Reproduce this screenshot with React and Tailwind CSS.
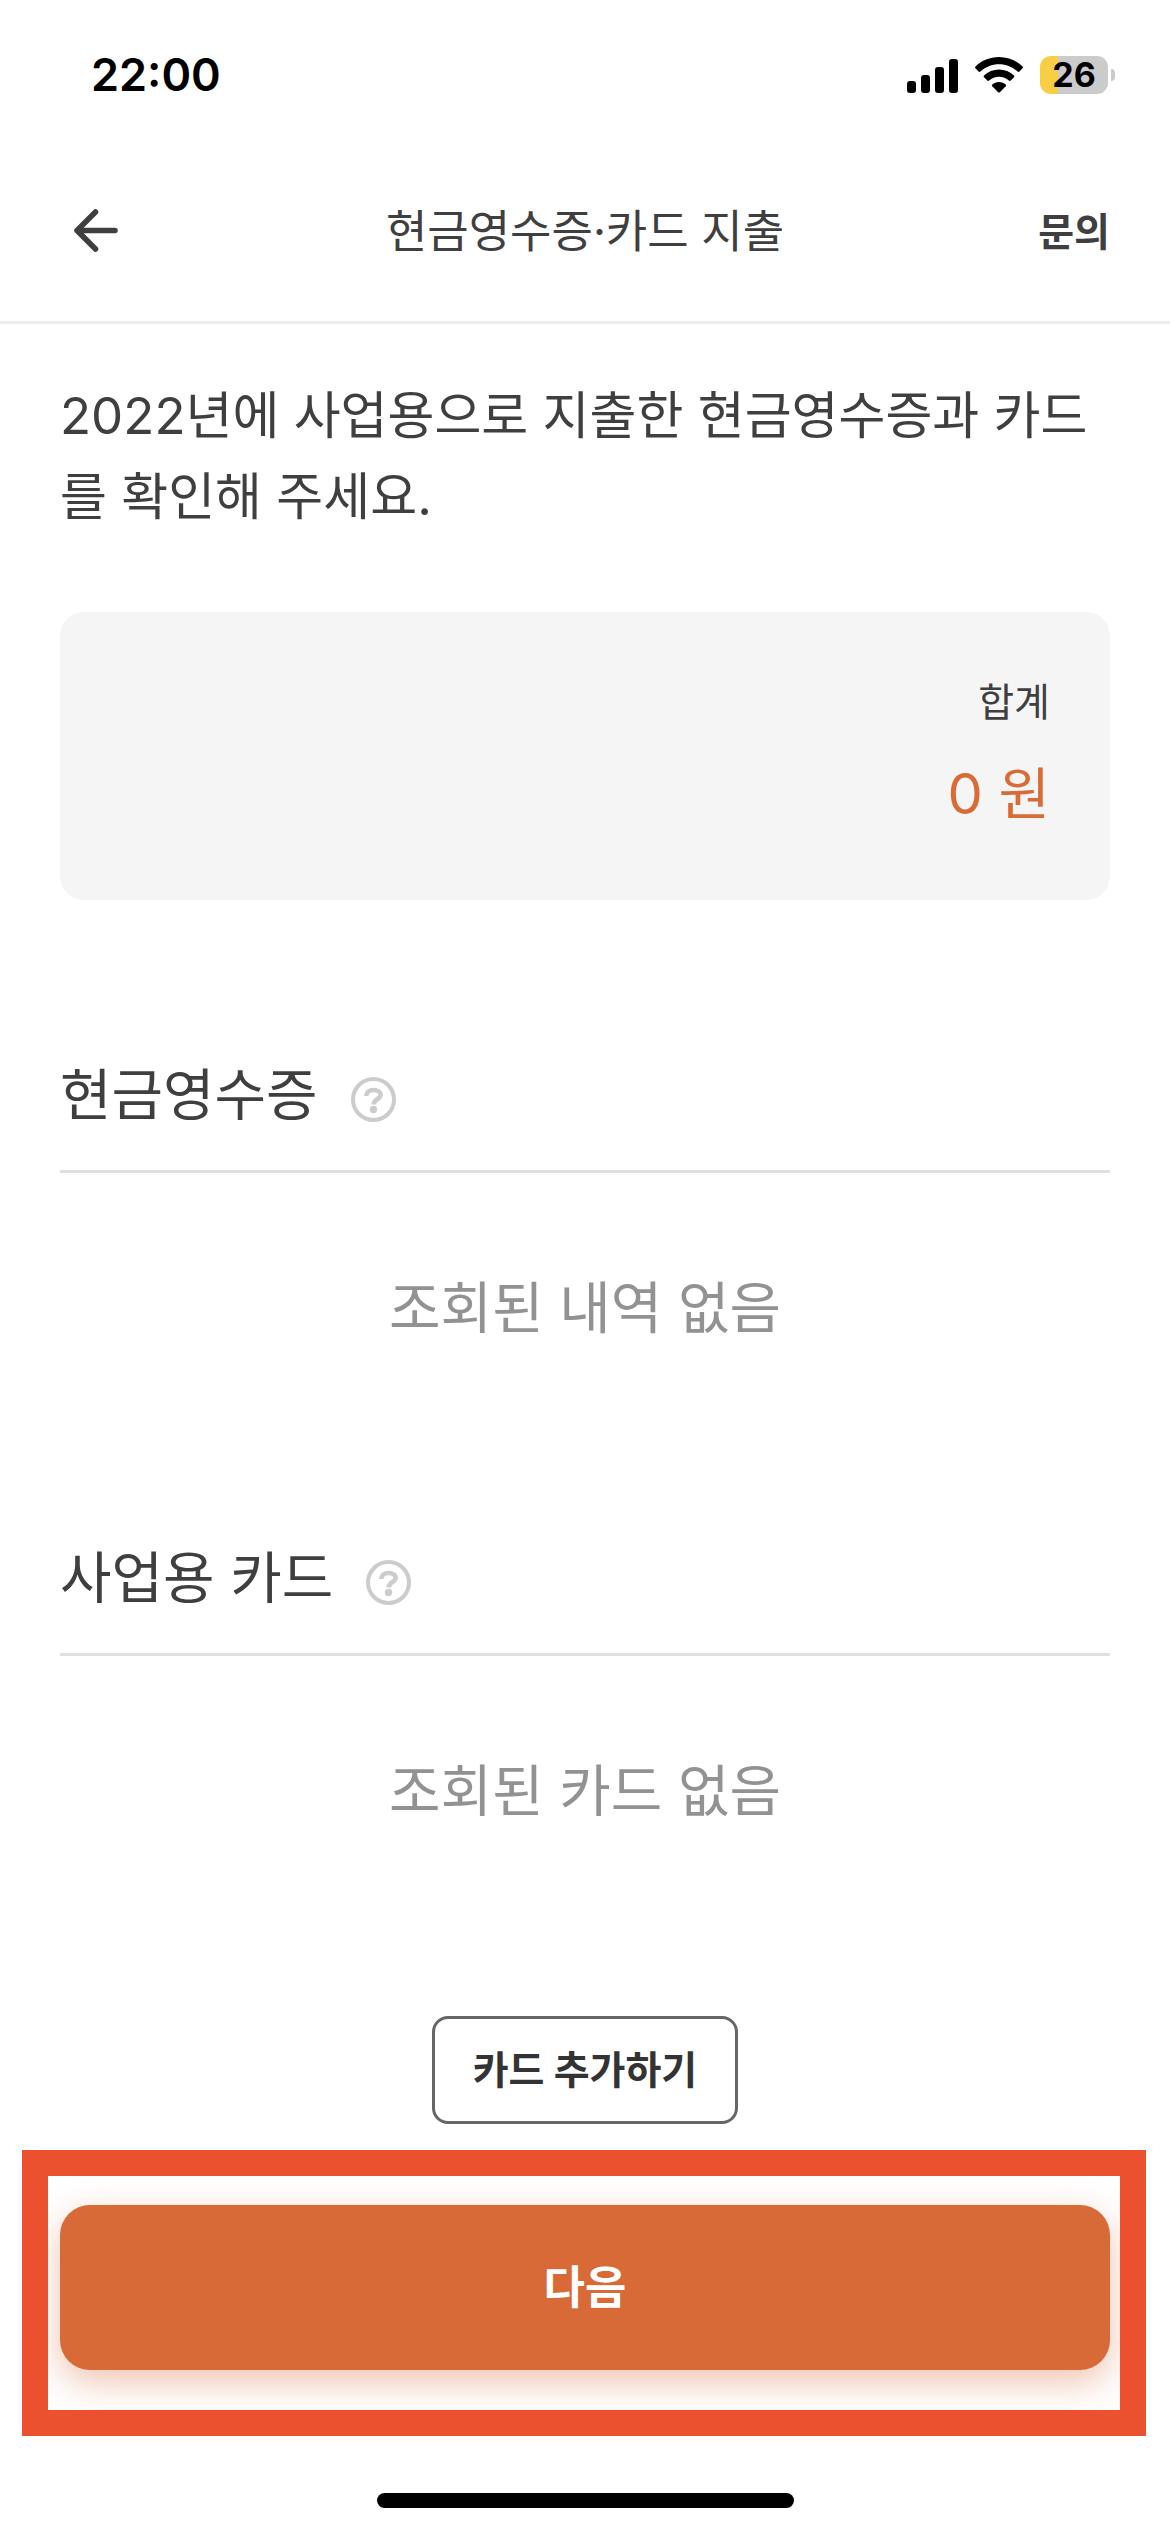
import React from 'react';

const sections = [
  { id: 'receipt', title: '현금영수증', empty: '조회된 내역 없음' },
  { id: 'card', title: '사업용 카드', empty: '조회된 카드 없음' },
];

function StatusBar() {
  return (
    <div className="flex justify-between items-center pt-[45px] pb-[33px] pl-[91px] pr-[55px] text-black">
      <span className="text-[45px] leading-[60px] font-semibold">22:00</span>
      <div className="flex items-center gap-[17px]">
        <svg width="51" height="36" viewBox="0 0 51 36" fill="currentColor">
          <rect x="0" y="24" width="9" height="12" rx="3" />
          <rect x="14" y="18" width="9" height="18" rx="3" />
          <rect x="28" y="10" width="9" height="26" rx="3" />
          <rect x="42" y="2" width="9" height="34" rx="3" />
        </svg>
        <svg width="48" height="36" viewBox="0 0 48 36" fill="currentColor">
          <path d="M24 0C33 0 41.500 3.500 47.500 9.500Q48.400 10.400 47.500 11.300L44.500 14.600Q43.600 15.500 42.700 14.600C37.600 9.800 31 7.200 24 7.200S10.400 9.800 5.300 14.600Q4.400 15.500 3.500 14.600L.5 11.300Q-.4 10.400.5 9.500C6.500 3.500 15 0 24 0Z" />
          <path d="M24 12.500C29.800 12.500 35 14.700 39 18.400Q39.900 19.300 39 20.200L35.700 23.500Q34.800 24.300 33.900 23.500C31.200 21.100 27.700 19.700 24 19.700S16.800 21.100 14.100 23.500Q13.200 24.300 12.300 23.500L9 20.200Q8.100 19.300 9 18.400C13 14.700 18.200 12.500 24 12.500Z" />
          <path d="M24 25C26.600 25 29 25.900 30.700 27.500Q31.500 28.300 30.700 29.200L24.900 35.200Q24 36 23.100 35.200L17.300 29.200Q16.500 28.300 17.300 27.500C19 25.900 21.400 25 24 25Z" />
        </svg>
        <div className="flex items-center gap-[3px]">
          <div className="flex items-center justify-center w-[68px] h-[38px] rounded-[11px] bg-linear-to-r from-[#f7ce46] from-[18px] to-[#cbcbcb] to-[18px] text-[34px] leading-[38px] font-bold">
            26
          </div>
          <div className="w-1 h-3 rounded-r-full bg-[#cbcbcb]"></div>
        </div>
      </div>
    </div>
  );
}

function Header() {
  return (
    <header className="grid grid-cols-[1fr_auto_1fr] items-center h-[186px] px-[60px] pt-1 border-b-3 border-[#ededed]">
      <button type="button" aria-label="뒤로" className="justify-self-start px-3">
        <svg width="48" height="48" viewBox="0 0 48 48" fill="none" stroke="currentColor" strokeWidth="5.500" strokeLinecap="round" strokeLinejoin="round">
          <path d="M43 22.500H5M23.500 4L5 22.500L23.500 41" />
        </svg>
      </button>
      <h1 className="text-[45px] leading-[60px]">현금영수증·카드 지출</h1>
      <button type="button" className="justify-self-end text-[39px] leading-[60px] font-bold">문의</button>
    </header>
  );
}

function HelpButton({ label }) {
  return (
    <button type="button" aria-label={label} className="mt-2 text-[#cccccc]">
      <svg width="45" height="45" viewBox="0 0 45 45" fill="none" stroke="currentColor" strokeWidth="4">
        <circle cx="22.500" cy="22.500" r="20.500" />
        <path strokeWidth="4.600" d="M15.300 19C15.300 15.200 18.300 13 22.500 13C26.800 13 29.700 14.900 29.700 17.800C29.700 22.200 22.700 21.900 22.700 27.500" />
        <circle cx="22.500" cy="32.500" r="3.700" fill="currentColor" stroke="none" />
      </svg>
    </button>
  );
}

function Section({ title, empty }) {
  return (
    <section>
      <div className="flex items-center gap-[33px] h-[120px] pb-[33px] border-b-3 border-[#e0e0e0]">
        <h2 className="text-[56px] leading-[84px]">{title}</h2>
        <HelpButton label={`${title} 도움말`} />
      </div>
      <p className="pt-[93px] text-[56px] leading-[84px] text-center text-[#929292]">{empty}</p>
    </section>
  );
}

export default function App() {
  return (
    <div className="w-full bg-white text-[#3f3f3f] font-['Inter','Noto_Sans_CJK_KR',sans-serif]">
      <StatusBar />
      <Header />

      <main className="px-[60px] pt-[51px]">
        <p className="text-[51px] leading-[81px] break-all">
          2022년에 사업용으로 지출한 현금영수증과 카드를 확인해 주세요.
        </p>

        <div className="mt-[75px] mb-[153px] px-[60px] pt-[60px] pb-16 rounded-3xl bg-[#f5f5f5] text-right">
          <div className="text-[39px] leading-[60px]">합계</div>
          <div className="mt-5 text-[56px] leading-[84px] text-[#d96b37]">0 원</div>
        </div>

        <div className="flex flex-col gap-[186px]">
          {sections.map((s) => (
            <Section key={s.id} title={s.title} empty={s.empty} />
          ))}
        </div>

        <div className="flex justify-center mt-[183px]">
          <button type="button" className="h-[108px] px-[38px] rounded-2xl border-3 border-[#666666] text-[#333333] text-[39px] leading-[60px] font-bold">
            카드 추가하기
          </button>
        </div>
      </main>

      {/* highlighted next step */}
      <div className="mt-[26px] ml-[22px] mr-6 pt-[29px] pb-10 pl-3 pr-[10px] border-26 border-[#eb502f] overflow-hidden">
        <button type="button" className="w-full h-[165px] rounded-[30px] bg-[#d76a36] text-white text-[45px] leading-[60px] font-bold shadow-[0_12px_36px_rgba(215,106,54,0.4)]">
          다음
        </button>
      </div>

      <div className="flex justify-center pt-[57px] pb-6">
        <div className="w-[417px] h-[15px] rounded-full bg-black"></div>
      </div>
    </div>
  );
}
